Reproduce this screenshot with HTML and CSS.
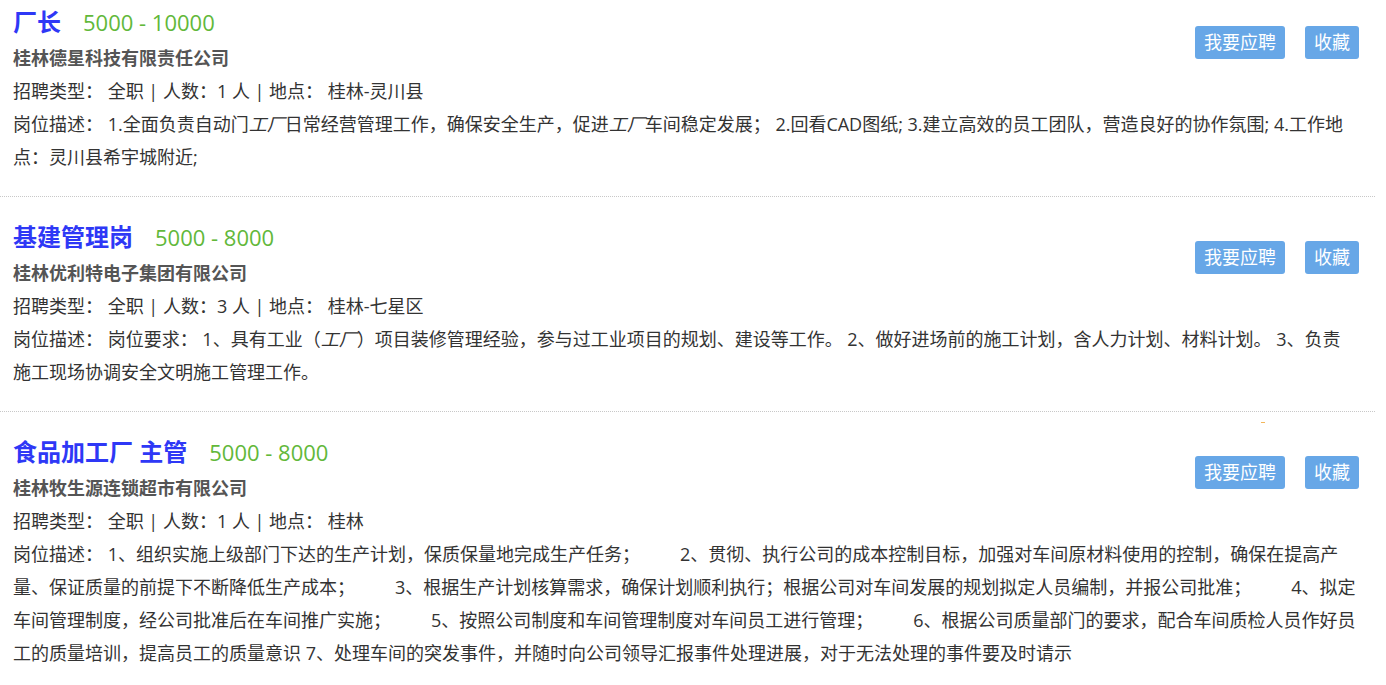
FILE: index.html
```html
<!DOCTYPE html>
<html lang="zh-CN">
<head>
    <meta charset="UTF-8">
    <meta name="viewport" content="width=device-width, initial-scale=1.0">
    <title>招聘信息</title>
    <link rel="stylesheet" href="styles.css">
</head>
<body>
    <div class="job-list">
        <!-- 职位 1 -->
        <div class="job-item">
            <div class="job-head">
                <div class="job-main">
                    <h3 class="job-title">厂长<span class="salary">5000 - 10000</span></h3>
                    <p class="company">桂林德星科技有限责任公司</p>
                </div>
                <div class="actions">
                    <a href="#" class="btn">我要应聘</a>
                    <a href="#" class="btn">收藏</a>
                </div>
            </div>
            <p class="info">招聘类型： 全职 | 人数：1 人 | 地点： 桂林-灵川县</p>
            <p class="desc">岗位描述： 1.全面负责自动门<i>工厂</i>日常经营管理工作，确保安全生产，促进<i>工厂</i>车间稳定发展； 2.回看CAD图纸; 3.建立高效的员工团队，营造良好的协作氛围; 4.工作地点：灵川县希宇城附近;</p>
        </div>

        <!-- 职位 2 -->
        <div class="job-item">
            <div class="job-head">
                <div class="job-main">
                    <h3 class="job-title">基建管理岗<span class="salary">5000 - 8000</span></h3>
                    <p class="company">桂林优利特电子集团有限公司</p>
                </div>
                <div class="actions">
                    <a href="#" class="btn">我要应聘</a>
                    <a href="#" class="btn">收藏</a>
                </div>
            </div>
            <p class="info">招聘类型： 全职 | 人数：3 人 | 地点： 桂林-七星区</p>
            <p class="desc">岗位描述： 岗位要求： 1、具有工业（<i>工厂</i>）项目装修管理经验，参与过工业项目的规划、建设等工作。 2、做好进场前的施工计划，含人力计划、材料计划。 3、负责施工现场协调安全文明施工管理工作。</p>
        </div>

        <!-- 职位 3 -->
        <div class="job-item">
            <span class="mark"></span>
            <div class="job-head">
                <div class="job-main">
                    <h3 class="job-title">食品加工厂 主管<span class="salary">5000 - 8000</span></h3>
                    <p class="company">桂林牧生源连锁超市有限公司</p>
                </div>
                <div class="actions">
                    <a href="#" class="btn">我要应聘</a>
                    <a href="#" class="btn">收藏</a>
                </div>
            </div>
            <p class="info">招聘类型： 全职 | 人数：1 人 | 地点： 桂林</p>
            <p class="desc">岗位描述： 1、组织实施上级部门下达的生产计划，保质保量地完成生产任务；<span class="gap"></span>2、贯彻、执行公司的成本控制目标，加强对车间原材料使用的控制，确保在提高产量、保证质量的前提下不断降低生产成本；<span class="gap"></span>3、根据生产计划核算需求，确保计划顺利执行；根据公司对车间发展的规划拟定人员编制，并报公司批准；<span class="gap"></span>4、拟定车间管理制度，经公司批准后在车间推广实施；<span class="gap"></span>5、按照公司制度和车间管理制度对车间员工进行管理；<span class="gap"></span>6、根据公司质量部门的要求，配合车间质检人员作好员工的质量培训，提高员工的质量意识 7、处理车间的突发事件，并随时向公司领导汇报事件处理进展，对于无法处理的事件要及时请示</p>
        </div>
    </div>
</body>
</html>
```

FILE: styles.css
```css
/* General Styles */
body {
    margin: 0;
    padding: 0;
    background: #fff;
    font-family: "Open Sans", "Noto Sans CJK SC", sans-serif;
    font-size: 18px;
    color: #333;
}

.job-list {
    width: 1375px;
}

.job-item {
    position: relative;
    padding: 4px 19px 22px 13px;
    border-bottom: 1px dotted #c8c8c8;
}

.job-item + .job-item {
    margin-top: 18px;
}

.job-head {
    display: flex;
    justify-content: space-between;
    align-items: flex-start;
}

.job-title {
    margin: 0;
    font-size: 24px;
    line-height: 36px;
    font-weight: bold;
    color: #2e38f6;
}

.salary {
    margin-left: 22px;
    font-size: 22px;
    font-weight: normal;
    color: #62b83a;
}

.company {
    margin: 2px 0 0;
    line-height: 33px;
    font-weight: bold;
    color: #555;
}

.actions {
    display: flex;
    gap: 20px;
    margin-top: 22px;
    margin-right: -3px;
}

.btn {
    display: inline-block;
    padding: 0 9px;
    height: 33px;
    line-height: 33px;
    font-size: 18px;
    color: #fff;
    background: #67a7e7;
    border-radius: 3px;
    text-decoration: none;
}

.info,
.desc {
    margin: 0;
    line-height: 33px;
}

.gap {
    display: inline-block;
    width: 40px;
}

.mark {
    position: absolute;
    top: -8px;
    left: 1261px;
    width: 4px;
    height: 1px;
    background: #f3b65a;
}
```
